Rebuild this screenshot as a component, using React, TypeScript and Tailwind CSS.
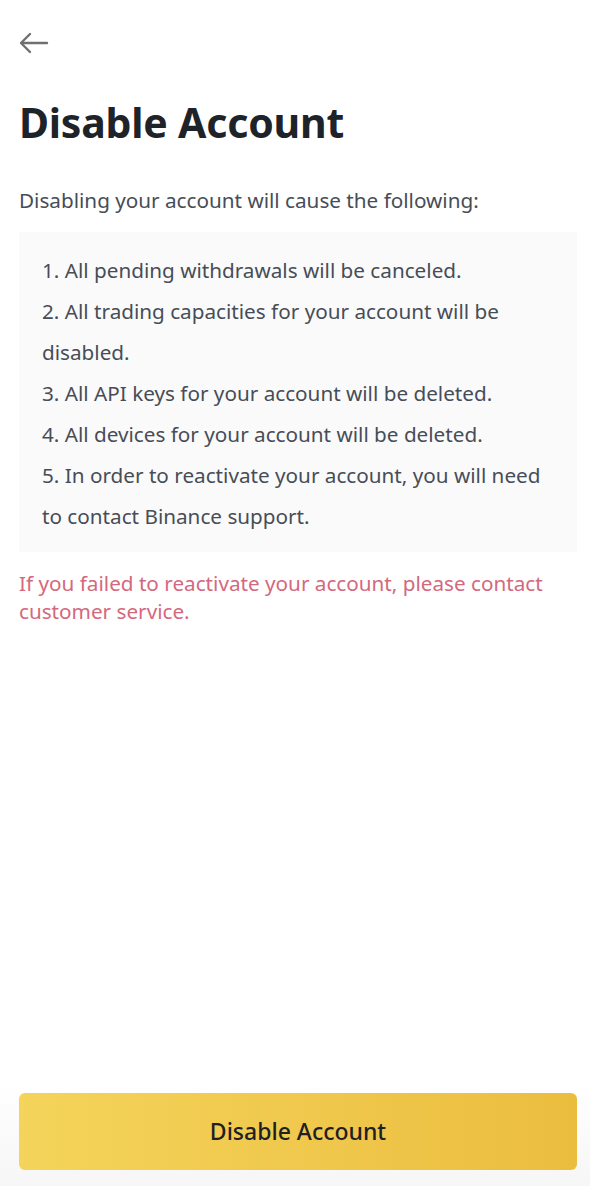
const items = [
  "1. All pending withdrawals will be canceled.",
  "2. All trading capacities for your account will be disabled.",
  "3. All API keys for your account will be deleted.",
  "4. All devices for your account will be deleted.",
  "5. In order to reactivate your account, you will need to contact Binance support.",
];

export default function App() {
  return (
    <div className="flex min-h-[1186px] flex-col bg-white font-['Noto_Sans',sans-serif] text-[#474d57]">
      <div className="pl-[19px] pr-[13px] pt-[32px]">
        <button type="button" className="block text-[#707070]">
          <svg width="30" height="22" viewBox="0 0 30 22" fill="none" stroke="currentColor" strokeWidth="2.4" strokeLinecap="round" strokeLinejoin="round">
            <path d="M28 11H3" />
            <path d="M11 2L2 11l9 9" />
          </svg>
        </button>

        <h1 className="mt-[44px] text-[41px] font-bold leading-[48px] tracking-[-0.2px] text-[#1e2329]">
          Disable Account
        </h1>

        <p className="mt-[41px] text-[20.7px] leading-[26px]">
          Disabling your account will cause the following:
        </p>

        <div className="mt-[19px] bg-[#fafafa] pb-[15px] pl-[23px] pr-[20px] pt-[18px]">
          {items.map((t) => (
            <p key={t} className="text-[20.7px] leading-[41px]">
              {t}
            </p>
          ))}
        </div>

        <p className="mt-[17px] text-[20.7px] leading-[28px] text-[#d4687d]">
          If you failed to reactivate your account, please contact customer service.
        </p>
      </div>

      <div className="mt-auto bg-gradient-to-b from-white to-[#f6f6f6] pb-[16px] pl-[19px] pr-[13px] pt-[12px]">
        <button
          type="button"
          className="flex h-[77px] w-full items-center justify-center rounded-[6px] bg-gradient-to-r from-[#f4d45a] to-[#ebbd3f] text-[23px] font-medium text-[#1e2026]"
        >
          Disable Account
        </button>
      </div>
    </div>
  );
}
